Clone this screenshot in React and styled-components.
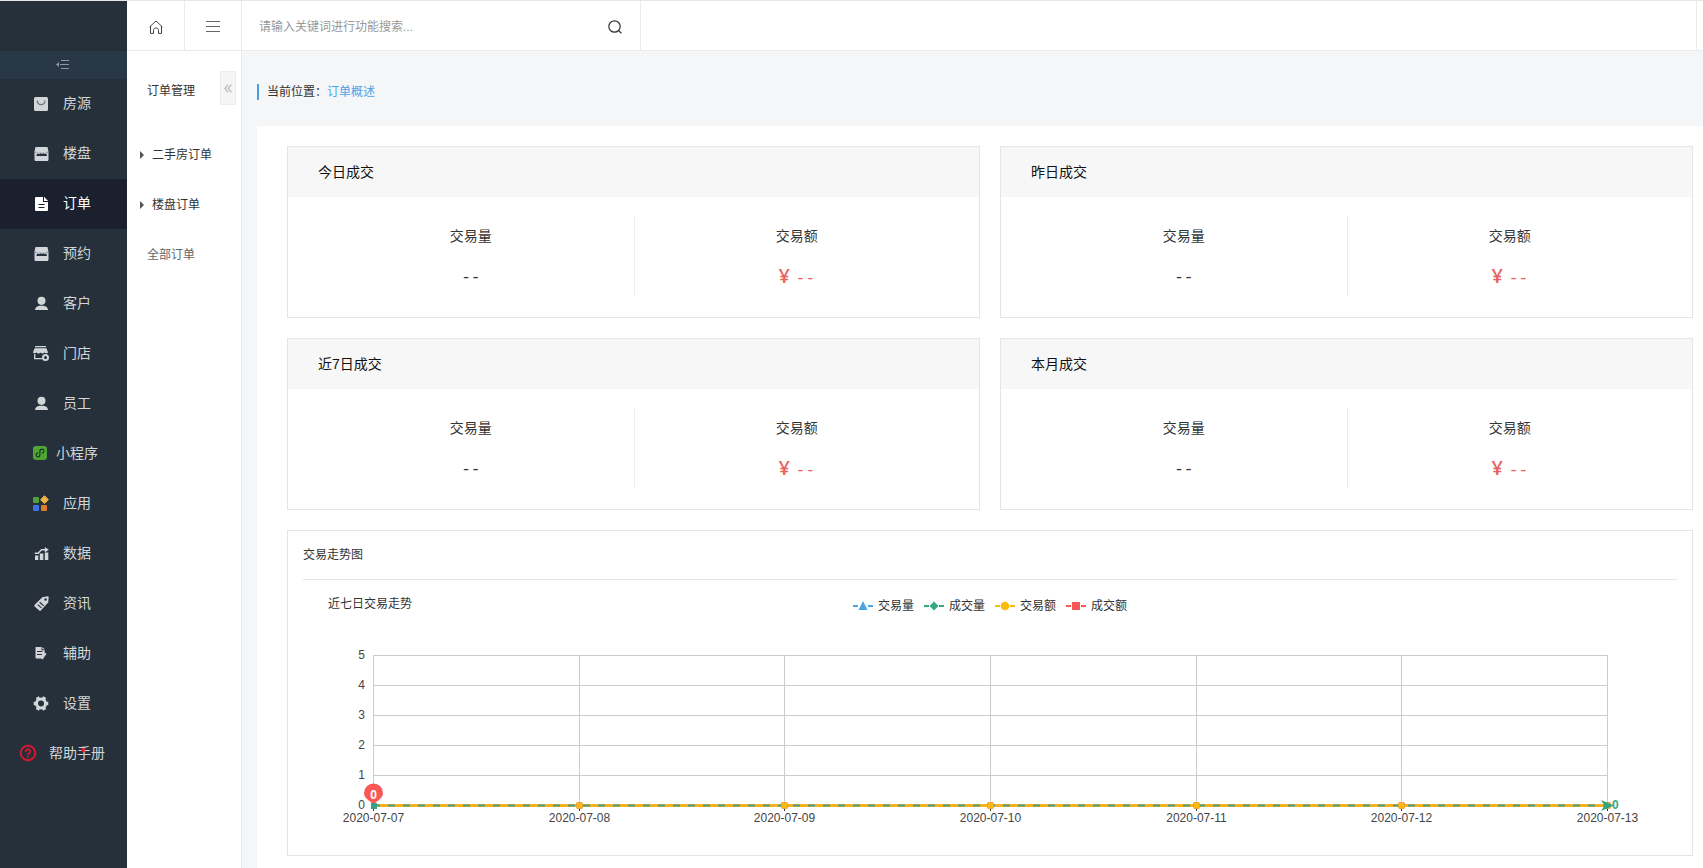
import React, { useLayoutEffect, useRef, useState } from "react";
import styled, { createGlobalStyle } from "styled-components";
import { AiOutlineQuestionCircle } from "react-icons/ai";

const GlobalStyle = createGlobalStyle`
  * { box-sizing: border-box; }
  body {
    margin: 0;
    background: #fff;
    color: #333;
    font: 12px/20px "Liberation Sans", "Noto Sans CJK SC", sans-serif;
  }
  a { color: inherit; text-decoration: none; }
  button { border: 0; padding: 0; background: none; font: inherit; color: inherit; cursor: pointer; }
  h1, h2, h3, p, ul, dl, dd { margin: 0; padding: 0; font-weight: 400; }
  ul { list-style: none; }
  svg { display: block; flex: none; }
`;

const Page = styled.div`
  display: flex;
  min-height: 100vh;
  border-top: 1px solid #e4e6e8;
`;

/* Main sidebar */

const Sidebar = styled.nav`
  flex: none;
  width: 127px;
  background: #25303b;
  color: #d3d6d9;
`;

const LogoSpace = styled.div`
  height: 50px;
`;

const CollapseButton = styled.button`
  display: flex;
  align-items: center;
  justify-content: center;
  width: 100%;
  height: 28px;
  padding: 0 2px 2px 0;
  background: #283847;
  color: #8d979f;
`;

const NavLink = styled.a`
  position: relative;
  display: grid;
  grid-template-columns: 30px 56px;
  align-items: center;
  height: 50px;
  padding: 0 0 2px 19px;
  font-size: 14px;
  background: ${(p) => (p.$active ? "#1a202d" : "transparent")};
  color: ${(p) => (p.$active ? "#fff" : "inherit")};
`;

const NavIcon = styled.span`
  display: flex;
  justify-content: ${(p) => (p.$wide ? "flex-start" : "flex-end")};
  color: ${(p) => p.$color || "inherit"};
`;

const NavLabel = styled.span`
  text-align: center;
  white-space: nowrap;
`;

const Dot = styled.i`
  position: absolute;
  left: 81px;
  top: 19px;
  width: 4px;
  height: 4px;
  border-radius: 2px;
  background: #e8152c;
`;

/* Header */

const Content = styled.div`
  flex: 1;
  min-width: 0;
  display: flex;
  flex-direction: column;
`;

const Header = styled.header`
  display: flex;
  height: 50px;
  border-bottom: 1px solid #e8eaec;
`;

const HeaderButton = styled.button`
  display: flex;
  align-items: center;
  justify-content: center;
  width: ${(p) => p.$width}px;
  padding-top: 2px;
  border-right: 1px solid #ebebeb;
  color: #444;
`;

const SearchForm = styled.form`
  display: flex;
  align-items: center;
  width: 399px;
  padding: 2px 18px 0 17px;
  border-right: 1px solid #ebebeb;
`;

const SearchInput = styled.input`
  flex: 1;
  min-width: 0;
  padding: 0;
  border: 0;
  outline: 0;
  background: none;
  font: inherit;
  color: #333;
  &::placeholder { color: #999; opacity: 1; }
`;

const HeaderEnd = styled.div`
  width: 7px;
  margin-left: auto;
  border-left: 1px solid #ebebeb;
`;

const Body = styled.div`
  flex: 1;
  display: flex;
`;

/* Second-level menu */

const SubNav = styled.nav`
  flex: none;
  width: 115px;
  border-right: 1px solid #e8eaec;
`;

const SubNavHead = styled.div`
  display: flex;
  align-items: flex-start;
  justify-content: space-between;
  padding: 20px 5px 19px 20px;
`;

const SubNavTitle = styled.h2`
  font-size: 12px;
  line-height: 40px;
`;

const FoldButton = styled.button`
  display: flex;
  align-items: center;
  justify-content: center;
  width: 16px;
  height: 34px;
  border: 1px solid #ececec;
  background: #f5f5f6;
  color: #bbb;
`;

const SubLink = styled.a`
  display: flex;
  align-items: center;
  gap: 8px;
  height: 50px;
  padding-left: ${(p) => (p.$plain ? 20 : 13)}px;
  color: ${(p) => (p.$plain ? "#666" : "#333")};
`;

/* Main area */

const Main = styled.main`
  flex: 1;
  min-width: 0;
  display: flex;
  flex-direction: column;
  padding-left: 15px;
  background: #f4f6f8;
`;

const Breadcrumb = styled.div`
  display: flex;
  align-items: center;
  height: 75px;
  padding-top: 6px;
  &::before {
    content: "";
    width: 2px;
    height: 16px;
    margin-right: 8px;
    background: #4a9fe0;
  }
  a { color: #4da3ea; }
`;

const Panel = styled.section`
  flex: 1;
  padding: 20px 10px 10px 30px;
  background: #fff;
`;

const CardGrid = styled.div`
  display: grid;
  grid-template-columns: 1fr 1fr;
  gap: 20px;
`;

const Card = styled.article`
  border: 1px solid #e4e5e6;
`;

const CardTitle = styled.h3`
  padding-left: 30px;
  background: #f7f7f7;
  color: #111;
  font-size: 14px;
  line-height: 50px;
`;

const Stats = styled.dl`
  display: grid;
  grid-template-columns: 1fr 1fr;
  padding: 19px 20px 21px;
`;

const Stat = styled.div`
  height: 80px;
  text-align: center;
  & + & { border-left: 1px solid #ececec; }
`;

const StatLabel = styled.dt`
  font-size: 14px;
  line-height: 40px;
`;

const StatValue = styled.dd`
  color: ${(p) => (p.$money ? "#e8605f" : "#333")};
  font: 16px/44px "Liberation Mono", monospace;
  span { margin-right: 6px; font: 600 20px/40px "Open Sans", sans-serif; }
`;

const ChartCard = styled.section`
  margin-top: 20px;
  padding: 0 15px;
  border: 1px solid #e4e5e6;
`;

const ChartTitle = styled.h3`
  border-bottom: 1px solid #e4e5e6;
  font-size: 12px;
  line-height: 48px;
`;

const ChartHead = styled.div`
  display: grid;
  grid-template-columns: 1fr auto 1fr;
  align-items: center;
  height: 52px;
`;

const ChartName = styled.p`
  padding: 0 0 4px 25px;
`;

const Legend = styled.ul`
  display: flex;
  gap: 10px;
  li { display: flex; align-items: center; gap: 5px; }
`;

const Plot = styled.svg`
  width: 100%;
  height: 223px;
  font: 12px "Liberation Sans", sans-serif;
`;

/* Icons */

const Icon15 = ({ children }) => (
  <svg width="15" height="15" viewBox="0 0 15 15" fill="currentColor" aria-hidden="true">{children}</svg>
);

const DARK = "#25303b";

const BagIcon = () => (
  <Icon15>
    <rect x="0" y="1" width="14" height="14" rx="1.5" />
    <path d="M3.2 4.500C3.600 10 10.600 10 11 4.500" fill="none" stroke="#6d747b" strokeWidth="1.200" />
  </Icon15>
);

const EstateIcon = () => (
  <Icon15>
    <path d="M1.500 1h12l1.200 5.400H.2z" />
    <path d="M.5 6.300h14v7.200c0 .8-.5 1.500-1.300 1.500H1.800C1 15 .5 14.300.5 13.500z" />
    <path d="M2.500 9.200C2.800 7.400 4.400 7 5.200 8.200 6 7 7.400 7 8 8.200 8.700 7 10 7 10.600 8.200c.9-1.200 2.100-.8 2.300 1v.9H2.500z" fill={DARK} />
    <path d="M.2 6.200h2M12.800 6.200h2" stroke={DARK} strokeWidth=".4" />
  </Icon15>
);

const OrderIcon = () => (
  <Icon15>
    <path d="M2.300 1H9v5h5v7.700c0 .8-.5 1.300-1.300 1.300H2.300C1.500 15 1 14.500 1 13.700V2.300C1 1.500 1.500 1 2.300 1z" />
    <path d="M10 .8L14.200 5H10z" />
    <path d="M4.500 8.500h6M4.500 11.500h6" stroke="#1a202d" strokeWidth="1" />
  </Icon15>
);

const UserIcon = () => (
  <Icon15>
    <ellipse cx="7.500" cy="4.800" rx="4" ry="4.100" />
    <path d="M1 14c.2-2.500 2-4 4.500-4.300h4c2.500.3 4.300 1.800 4.500 4.300z" />
  </Icon15>
);

const StoreIcon = () => (
  <svg width="16" height="15" viewBox="0 0 16 15" fill="currentColor" aria-hidden="true">
    <path d="M2 0h11v1.200H2zM1.600 2.200h11.800L15 6.200c-.3 1.300-2.700 1.500-3.700.3-1.100 1.200-2.800 1.200-3.800 0-1.100 1.200-2.800 1.200-3.900 0C2.500 7.700.4 7.500 0 6.200z" />
    <path d="M1.700 8v4.700h7.500" fill="none" stroke="currentColor" strokeWidth="1.300" />
    <circle cx="12.500" cy="11.500" r="2.500" fill="none" stroke="currentColor" strokeWidth="2" />
  </svg>
);

const MiniAppIcon = () => (
  <svg width="16" height="14" viewBox="0 0 16 14" aria-hidden="true">
    <rect x="0" y="0" width="14" height="14" rx="3" fill="#4fa534" />
    <path d="M4.800 6.800C2.400 7.400 2.600 10.800 4.900 10.800c1.200 0 2-.8 2-2V5.400c0-1.400.9-2.200 2.100-2.200 2.500 0 2.800 3.200.3 3.900" fill="none" stroke="#173c20" strokeWidth="1.200" strokeLinecap="round" />
  </svg>
);

const AppsIcon = () => (
  <svg width="16" height="16" viewBox="0 0 16 16" aria-hidden="true">
    <rect x="0" y="2" width="6" height="6" rx="1" fill="#4fa03c" />
    <rect x="0" y="10" width="6" height="6" rx="1" fill="#3f72e0" />
    <rect x="8" y="10" width="6" height="6" rx="1" fill="#e07a2b" />
    <path d="M11.500.8l3.900 3.900-3.900 3.900-3.900-3.900z" fill="#f3b344" stroke="#f3b344" strokeLinejoin="round" />
  </svg>
);

const DataIcon = () => (
  <Icon15>
    <path d="M1 9.500h3.300V14H1zM5.800 7.600h3.500V14H5.800zM10.800 6.400h3.500V14h-3.500z" />
    <path d="M.8 7.300h3.400l3.200-3.500h4" fill="none" stroke="currentColor" strokeWidth="1.400" />
    <path d="M10.800 1l4 2.800-4 2.600z" />
  </Icon15>
);

const TagIcon = () => (
  <Icon15>
    <path d="M8.300 1.200L13.600.2c.7-.1 1.100.3 1.100 1l-.5 5.400-7.400 8c-.5.500-1.100.500-1.600 0L.7 10.400c-.5-.5-.5-1 0-1.600z" />
    <circle cx="11.600" cy="3.500" r="1.200" fill={DARK} />
    <path d="M5.700 6.300l4 3.600M3.700 8.600l3.700 3.300" stroke={DARK} strokeWidth="1.200" />
  </Icon15>
);

const AssistIcon = () => (
  <svg width="14" height="13" viewBox="0 0 14 13" fill="currentColor" aria-hidden="true">
    <path d="M.5 0h6v3.200h3.200V7L6.500 11.500H1.300C.8 11.500.5 11.200.5 10.700z" />
    <path d="M7.400 0l2.400 2.300H7.400z" />
    <path d="M2 4.500h5.500M2 7.500h5" stroke={DARK} strokeWidth="1" />
    <path d="M10.800 6.300l-4 5.600" stroke="currentColor" strokeWidth="1.800" />
  </svg>
);

const GearIcon = () => (
  <svg width="16" height="15" viewBox="0 0 16 15" fill="none" stroke="currentColor" aria-hidden="true">
    <circle cx="8" cy="7.500" r="4.500" strokeWidth="3" />
    <path d="M.7 7.500h2.600M12.700 7.500h2.600M4.300 1.200l1.300 2.200M10.400 11.600l1.300 2.200M11.700 1.200l-1.300 2.200M5.600 11.600l-1.300 2.200" strokeWidth="3.600" />
  </svg>
);

const CollapseIcon = () => (
  <svg width="14" height="9" viewBox="0 0 14 9" fill="currentColor" aria-hidden="true">
    <path d="M0 4.500L3 2v5z" />
    <path d="M5 .5h8M4 4.500h9M5 8.500h8" stroke="currentColor" strokeWidth="1" />
  </svg>
);

const HomeIcon = () => (
  <svg width="14" height="14" viewBox="0 0 14 14" fill="none" stroke="currentColor" aria-hidden="true">
    <path d="M.6 6.900L7 1l6.400 5.900M1.500 6v7.400h3V10.200c0-3 5-3 5 0v3.200h3V6" />
  </svg>
);

const MenuIcon = () => (
  <svg width="14" height="11" viewBox="0 0 14 11" stroke="#666" aria-hidden="true">
    <path d="M0 .5h14M0 5.500h14M0 10.500h14" />
  </svg>
);

const SearchIcon = () => (
  <svg width="14" height="14" viewBox="0 0 14 14" fill="none" stroke="#333" strokeWidth="1.200" aria-hidden="true">
    <circle cx="6.500" cy="6.500" r="5.700" />
    <path d="M10.800 10.800l2.600 2.400" />
  </svg>
);

const FoldIcon = () => (
  <svg width="8" height="9" viewBox="0 0 8 9" fill="none" stroke="currentColor" strokeWidth="1.300" aria-hidden="true">
    <path d="M4 .6L.9 4.500 4 8.400M7.300.6L4.200 4.500l3.100 3.900" />
  </svg>
);

const Caret = () => (
  <svg width="4" height="8" viewBox="0 0 4 8" fill="#555" aria-hidden="true"><path d="M0 0l4 4-4 4z" /></svg>
);

/* Data */

const NAV = [
  { label: "房源", icon: BagIcon },
  { label: "楼盘", icon: EstateIcon },
  { label: "订单", icon: OrderIcon, active: true },
  { label: "预约", icon: EstateIcon },
  { label: "客户", icon: UserIcon },
  { label: "门店", icon: StoreIcon },
  { label: "员工", icon: UserIcon },
  { label: "小程序", icon: MiniAppIcon },
  { label: "应用", icon: AppsIcon },
  { label: "数据", icon: DataIcon },
  { label: "资讯", icon: TagIcon },
  { label: "辅助", icon: AssistIcon },
  { label: "设置", icon: GearIcon },
];

const CARDS = ["今日成交", "昨日成交", "近7日成交", "本月成交"];

const SERIES = [
  { name: "交易量", color: "#4aa3e3", mark: <path d="M10 1l4.500 9h-9z" /> },
  { name: "成交量", color: "#35a883", mark: <path d="M10 1.500l4.500 4.500-4.500 4.500L5.500 6z" /> },
  { name: "交易额", color: "#fbbd0c", mark: <circle cx="10" cy="6" r="4.300" /> },
  { name: "成交额", color: "#f95855", mark: <rect x="6" y="2" width="8" height="8" /> },
];

const DAYS = ["07", "08", "09", "10", "11", "12", "13"].map((d) => `2020-07-${d}`);

function TrendChart() {
  const ref = useRef(null);
  const [width, setWidth] = useState(1374);

  useLayoutEffect(() => {
    const measure = () => setWidth(ref.current.getBoundingClientRect().width);
    measure();
    const observer = new ResizeObserver(measure);
    observer.observe(ref.current);
    return () => observer.disconnect();
  }, []);

  const left = 70;
  const right = Math.round(width - 70);
  const top = 23;
  const bottom = 173;
  const x = (i) => Math.round(left + ((right - left) * i) / (DAYS.length - 1));

  return (
    <Plot ref={ref} role="img" aria-label="近七日交易走势">
      <g stroke="#ccc" shapeRendering="crispEdges">
        {[0, 1, 2, 3, 4, 5].map((v) => (
          <line key={v} x1={left} x2={right} y1={bottom - v * 30 + 0.5} y2={bottom - v * 30 + 0.5} />
        ))}
        {DAYS.map((d, i) => (
          <line key={d} x1={x(i) + 0.5} x2={x(i) + 0.5} y1={top} y2={bottom} />
        ))}
      </g>
      <g stroke="#333" shapeRendering="crispEdges">
        {DAYS.map((d, i) => (
          <line key={d} x1={x(i) + 0.5} x2={x(i) + 0.5} y1={bottom} y2={bottom + 6} />
        ))}
      </g>
      <g fill="#444" textAnchor="end">
        {[0, 1, 2, 3, 4, 5].map((v) => (
          <text key={v} x={left - 8} y={bottom - v * 30 + 4}>{v}</text>
        ))}
      </g>
      <g fill="#444" textAnchor="middle">
        {DAYS.map((d, i) => (
          <text key={d} x={x(i) + 0.5} y={bottom + 17}>{d}</text>
        ))}
      </g>
      <line x1={left} x2={right} y1={bottom + 0.5} y2={bottom + 0.5} stroke="#f2b521" strokeWidth="3" />
      <line x1={left} x2={right} y1={bottom + 0.5} y2={bottom + 0.5} stroke="#4a9f86" strokeWidth="2" strokeDasharray="7 8" />
      {DAYS.slice(1).map((d, i) => (
        <rect key={d} x={x(i + 1) - 2.5} y={bottom - 2.500} width="6" height="6" rx="1" fill="#fbb90f" stroke="#e9a03c" />
      ))}
      <path
        d={`M${left + 0.5} ${bottom + 1}c-1-5-9.500-6-9.500-13a9.500 9.500 0 0 1 19 0c0 7-8.500 8-9.500 13z`}
        fill="#f95855"
      />
      <text x={left + 0.5} y={bottom - 6} fill="#fff" fontWeight="700" textAnchor="middle">0</text>
      <rect x={left - 2} y={bottom - 2} width="6" height="6" fill="#3c9f85" />
      <path d={`M${right + 7} ${bottom + 0.5}l-13-5.500 3.500 5.500-3.500 5.500z`} fill="#2fa583" />
      <text x={right + 5} y={bottom + 4} fill="#35a883" fontWeight="700">0</text>
    </Plot>
  );
}

export default function App() {
  return (
    <>
      <GlobalStyle />
      <Page>
        <Sidebar>
          <LogoSpace />
          <CollapseButton aria-label="收起菜单"><CollapseIcon /></CollapseButton>
          {NAV.map(({ label, icon: Icon, active }) => (
            <NavLink key={label} href="#" $active={active}>
              <NavIcon><Icon /></NavIcon>
              <NavLabel>{label}</NavLabel>
            </NavLink>
          ))}
          <NavLink href="#">
            <NavIcon $wide $color="#e8152c">
              <AiOutlineQuestionCircle size={18} strokeWidth={36} stroke="currentColor" />
            </NavIcon>
            <NavLabel>帮助手册</NavLabel>
            <Dot />
          </NavLink>
        </Sidebar>

        <Content>
          <Header>
            <HeaderButton $width={58} aria-label="首页"><HomeIcon /></HeaderButton>
            <HeaderButton $width={57} aria-label="菜单"><MenuIcon /></HeaderButton>
            <SearchForm>
              <SearchInput placeholder="请输入关键词进行功能搜索..." aria-label="功能搜索" />
              <button type="button" aria-label="搜索"><SearchIcon /></button>
            </SearchForm>
            <HeaderEnd />
          </Header>

          <Body>
            <SubNav>
              <SubNavHead>
                <SubNavTitle>订单管理</SubNavTitle>
                <FoldButton aria-label="折叠"><FoldIcon /></FoldButton>
              </SubNavHead>
              <SubLink href="#"><Caret />二手房订单</SubLink>
              <SubLink href="#"><Caret />楼盘订单</SubLink>
              <SubLink href="#" $plain>全部订单</SubLink>
            </SubNav>

            <Main>
              <Breadcrumb>当前位置：<a href="#">订单概述</a></Breadcrumb>
              <Panel>
                <CardGrid>
                  {CARDS.map((title) => (
                    <Card key={title}>
                      <CardTitle>{title}</CardTitle>
                      <Stats>
                        <Stat>
                          <StatLabel>交易量</StatLabel>
                          <StatValue>--</StatValue>
                        </Stat>
                        <Stat>
                          <StatLabel>交易额</StatLabel>
                          <StatValue $money><span>¥</span>--</StatValue>
                        </Stat>
                      </Stats>
                    </Card>
                  ))}
                </CardGrid>

                <ChartCard>
                  <ChartTitle>交易走势图</ChartTitle>
                  <ChartHead>
                    <ChartName>近七日交易走势</ChartName>
                    <Legend>
                      {SERIES.map((s) => (
                        <li key={s.name}>
                          <svg width="20" height="12" viewBox="0 0 20 12" fill={s.color} aria-hidden="true">
                            <path d="M0 6h5M15 6h5" stroke={s.color} strokeWidth="2" />
                            {s.mark}
                          </svg>
                          {s.name}
                        </li>
                      ))}
                    </Legend>
                  </ChartHead>
                  <TrendChart />
                </ChartCard>
              </Panel>
            </Main>
          </Body>
        </Content>
      </Page>
    </>
  );
}
